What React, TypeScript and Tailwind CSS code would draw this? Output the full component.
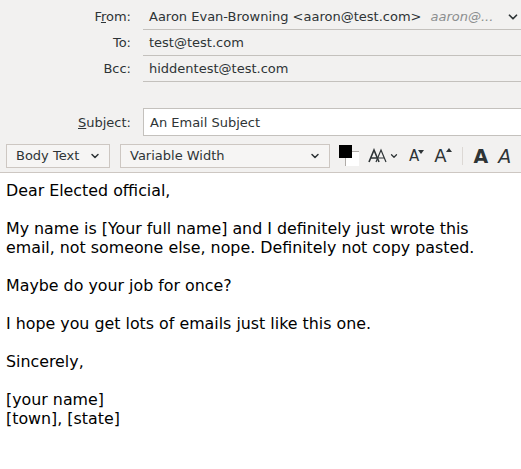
import { ChevronDown } from 'lucide-react';

const font = "font-['DejaVu_Sans',sans-serif]";

function HeaderRow({ label, access, children }: { label: string; access?: number; children: React.ReactNode }) {
  return (
    <div className="flex h-[26px]">
      <div className="w-[143px] shrink-0 pr-[12px] flex items-center justify-end text-[13px] text-[#2e3436]">
        {access === undefined ? (
          label
        ) : (
          <span>
            {label.slice(0, access)}
            <span className="underline">{label[access]}</span>
            {label.slice(access + 1)}
          </span>
        )}
      </div>
      <div className="flex-1 flex items-center border-b border-[#c4c1bd] pl-[6px] text-[13px] text-[#2e3436]">
        {children}
      </div>
    </div>
  );
}

const body = [
  ['Dear Elected official,'],
  ['My name is [Your full name] and I definitely just wrote this', 'email, not someone else, nope. Definitely not copy pasted.'],
  ['Maybe do your job for once?'],
  ['I hope you get lots of emails just like this one.'],
  ['Sincerely,'],
  ['[your name]', '[town], [state]'],
];

export default function App() {
  return (
    <div className={`w-[521px] h-[469px] bg-[#f2f1f0] ${font} flex flex-col overflow-hidden`}>
      <div className="pt-[4px]">
        <HeaderRow label="From:" access={1}>
          <span className="whitespace-nowrap">Aaron Evan-Browning &lt;aaron@test.com&gt;</span>
          <span className="ml-[9px] italic text-[#8b8e8f] whitespace-nowrap">aaron@...</span>
          <ChevronDown size={14} strokeWidth={3} className="ml-[13px] text-[#2e3436]" />
        </HeaderRow>
        <HeaderRow label="To:">test@test.com</HeaderRow>
        <HeaderRow label="Bcc:">hiddentest@test.com</HeaderRow>
      </div>

      <div className="flex mt-[26px] h-[28px]">
        <div className="w-[143px] shrink-0 pr-[12px] flex items-center justify-end text-[13px] text-[#2e3436] pt-[1px]">
          <span>
            <span className="underline">S</span>ubject:
          </span>
        </div>
        <div className="flex-1 -mr-[4px] bg-white border border-[#c4c1bd] flex items-center pl-[6px] pt-[1px] text-[13px] text-[#2e3436]">
          An Email Subject
        </div>
      </div>

      <div className="flex items-center h-[24px] mt-[8px] px-[6px] text-[13px] text-[#2e3436]">
        <div className="w-[104px] h-full border border-[#cdc7c2] bg-[#f6f5f4] flex items-center pl-[9px] pr-[8px]">
          <span className="flex-1">Body Text</span>
          <ChevronDown size={12} strokeWidth={3} />
        </div>
        <div className="ml-[10px] w-[210px] h-full border border-[#cdc7c2] bg-[#f6f5f4] flex items-center pl-[9px] pr-[8px]">
          <span className="flex-1">Variable Width</span>
          <ChevronDown size={12} strokeWidth={3} />
        </div>
        <div className="ml-[9px] relative w-[21px] h-[22px]">
          <div className="absolute left-[6px] top-[6px] w-[14px] h-[15px] bg-white border-t border-l border-[#b0aca8]" />
          <div className="absolute left-0 top-0 w-[13px] h-[13px] bg-black" />
        </div>
        <div className="ml-[8px] flex items-center">
          <svg width="20" height="16" viewBox="0 0 20 16" className="text-[#2e3436]">
            <path d="M1 14 L6 2 L11 14 M3 10 H9" stroke="currentColor" strokeWidth="1.6" fill="none" />
            <path d="M8 14 L13 2 L18 14 M10 10 H16" stroke="currentColor" strokeWidth="1.2" fill="none" />
          </svg>
          <ChevronDown size={10} strokeWidth={3} className="ml-[1px]" />
        </div>
        <div className="ml-[10px] flex items-start">
          <span className="text-[15px] leading-none text-[#2e3436]">A</span>
          <svg width="6" height="5" viewBox="0 0 6 5" className="-ml-[1px] mt-[1px]">
            <path d="M0 0 H6 L3 4 Z" fill="#2e3436" />
          </svg>
        </div>
        <div className="ml-[10px] flex items-start">
          <span className="text-[18px] leading-none text-[#2e3436]">A</span>
          <svg width="6" height="5" viewBox="0 0 6 5" className="-ml-[1px] mt-[1px]">
            <path d="M0 4 H6 L3 0 Z" fill="#2e3436" />
          </svg>
        </div>
        <div className="ml-[10px] w-px h-[18px] bg-[#dcd8d4]" />
        <span className="ml-[11px] text-[19px] leading-none font-bold text-[#2e3436]">A</span>
        <span className="ml-[10px] text-[19px] leading-none italic text-[#2e3436]">A</span>
      </div>

      <div className="mt-[4px] flex-1 bg-white border-t border-[#cdc7c2] pt-[8px] pl-[6px] text-[15.85px] leading-[19px] text-black">
        {body.map((p, i) => (
          <p key={i} className={i > 0 ? 'mt-[19px]' : ''}>
            {p.map((l, j) => (
              <span key={j} className="block whitespace-nowrap">
                {l}
              </span>
            ))}
          </p>
        ))}
      </div>
    </div>
  );
}
